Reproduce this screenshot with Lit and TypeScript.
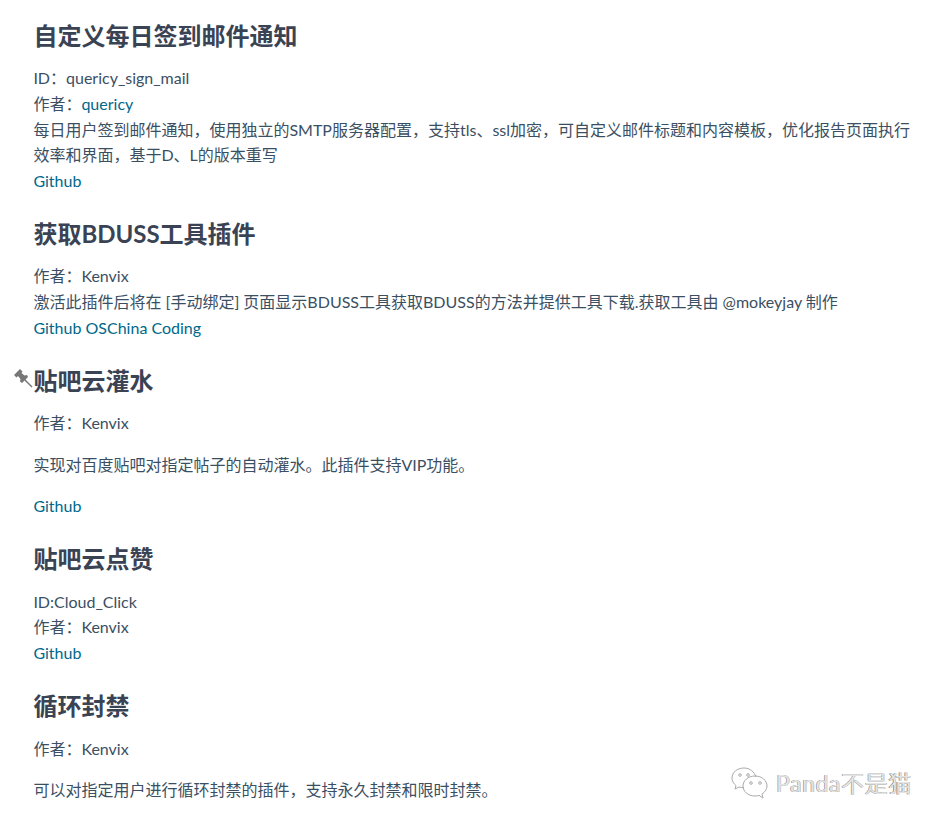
import { LitElement, html, css } from "lit";
import { customElement } from "lit/decorators.js";

@customElement("app-root")
export class AppRoot extends LitElement {
  static styles = css`
    :host { display: block; position: relative; height: 824px; overflow: hidden; background: #fff;
      font-family: "Lato", "Noto Sans CJK SC", sans-serif; font-size: 16px; line-height: 25.6px; color: #3b4f63; }
    .page { padding: 11.4px 30px 0 33.4px; }
    h3 { position: relative; margin: 0; padding: 7.6px 0 12.4px; font-size: 24px; line-height: 34px; font-weight: 700; color: #3a4354; }
    p { margin: 0 0 16px; }
    a { color: #00688b; text-decoration: none; }
    .pin { position: absolute; left: -20px; top: 12px; width: 20px; height: 20px; }
    .mark { position: absolute; left: 731px; top: 766px; display: flex; align-items: center; gap: 7px; font-size: 23px; letter-spacing: .6px; line-height: 30px;
      color: #e4e4e4; text-shadow: -0.6px 0 0 #777, 0.6px 0.4px 0 #bbb; }
    .mark svg { width: 38px; height: 34px; }
  `;
  render() {
    return html`<div class="page">
      <h3>自定义每日签到邮件通知</h3>
      <p>ID：quericy_sign_mail<br>作者：<a>quericy</a><br>每日用户签到邮件通知，使用独立的SMTP服务器配置，支持tls、ssl加密，可自定义邮件标题和内容模板，优化报告页面执行效率和界面，基于D、L的版本重写<br><a>Github</a></p>
      <h3>获取BDUSS工具插件</h3>
      <p>作者：Kenvix<br>激活此插件后将在 [手动绑定] 页面显示BDUSS工具获取BDUSS的方法并提供工具下载.获取工具由 @mokeyjay 制作<br><a>Github</a> <a>OSChina</a> <a>Coding</a></p>
      <h3><svg class="pin" viewBox="0 0 20 20"><path fill="#777" d="M1 7 7 1 9.500 3.500 8.500 5 11.500 7.500 14 7 15 9 9 15 7 13.500 7.500 11 5 8 3.500 9.500Z"/><path stroke="#777" stroke-width="1.400" d="M11 11 19 19"/></svg>贴吧云灌水</h3>
      <p>作者：Kenvix</p>
      <p>实现对百度贴吧对指定帖子的自动灌水。此插件支持VIP功能。</p>
      <p><a>Github</a></p>
      <h3>贴吧云点赞</h3>
      <p>ID:Cloud_Click<br>作者：Kenvix<br><a>Github</a></p>
      <h3>循环封禁</h3>
      <p>作者：Kenvix</p>
      <p>可以对指定用户进行循环封禁的插件，支持永久封禁和限时封禁。</p>
    </div>
    <div class="mark"><svg viewBox="0 0 38 34" fill="none" stroke="#aaa" stroke-width="1"><path d="M13 2C6 2 1 6.500 1 12c0 3 1.500 5.500 4 7.500L4 23l4-2c1.500.5 3 .7 5 .7M25 11c-1.500-5-6-9-12-9"/><path d="M24 10c-7 0-12 4.500-12 10s5 10 12 10c1.500 0 3-.2 4-.6l4 2.600-1-4c3-2 5-4.800 5-8 0-5.500-5-10-12-10Z"/><circle cx="9" cy="9" r="1.300"/><circle cx="17" cy="9" r="1.300"/><circle cx="20" cy="17" r="1.300"/><circle cx="29" cy="17" r="1.300"/></svg><span>Panda不是猫</span></div>`;
  }
}
